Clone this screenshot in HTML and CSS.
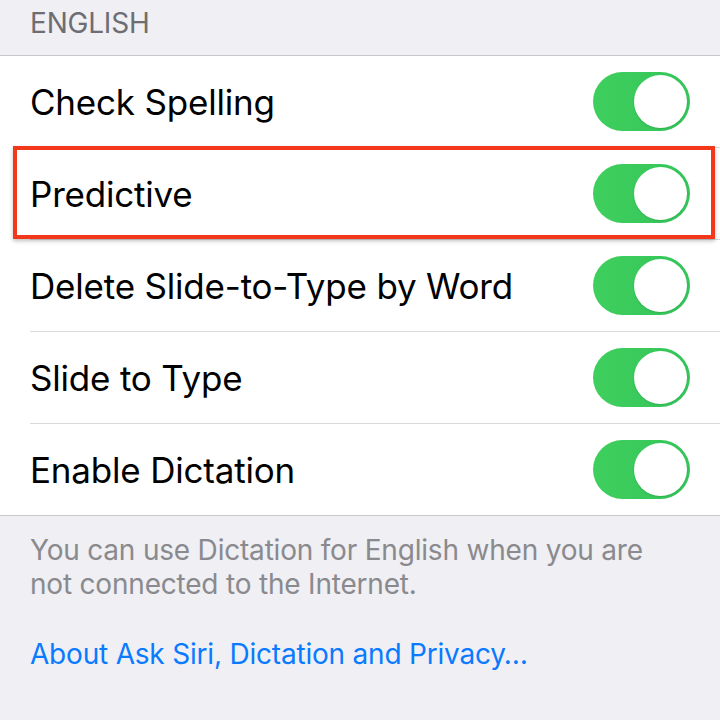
FILE: index.html
```html
<!DOCTYPE html>
<html lang="en">
<head>
<meta charset="utf-8">
<title>Keyboards</title>
<link rel="stylesheet" href="styles.css">
</head>
<body>
<div class="page">
  <div class="section-header">ENGLISH</div>
  <div class="list">
    <div class="row">
      <div class="row-inner">
        <span class="label">Check Spelling</span>
        <span class="switch on"><span class="knob"></span></span>
      </div>
    </div>
    <div class="row highlighted">
      <div class="row-inner">
        <span class="label">Predictive</span>
        <span class="switch on"><span class="knob"></span></span>
      </div>
    </div>
    <div class="row">
      <div class="row-inner">
        <span class="label">Delete Slide-to-Type by Word</span>
        <span class="switch on"><span class="knob"></span></span>
      </div>
    </div>
    <div class="row">
      <div class="row-inner">
        <span class="label">Slide to Type</span>
        <span class="switch on"><span class="knob"></span></span>
      </div>
    </div>
    <div class="row">
      <div class="row-inner">
        <span class="label">Enable Dictation</span>
        <span class="switch on"><span class="knob"></span></span>
      </div>
    </div>
  </div>
  <div class="footer">
    <p class="footer-note">You can use Dictation for English when you are not connected to the Internet.</p>
    <a class="footer-link" href="#">About Ask Siri, Dictation and Privacy…</a>
  </div>
</div>
</body>
</html>
```
FILE: styles.css
```css
html, body {
  margin: 0;
  padding: 0;
  background: #efeff4;
}
body {
  font-family: Inter, "Noto Sans", "Liberation Sans", sans-serif;
  -webkit-font-smoothing: antialiased;
}
.page {
  width: 720px;
  height: 720px;
  overflow: hidden;
  background: #efeff4;
}
.section-header {
  height: 56px;
  box-sizing: border-box;
  padding: 7px 0 0 30px;
  font-size: 28px;
  line-height: 32px;
  color: #6d6d72;
  letter-spacing: -0.2px;
  border-bottom: 1px solid #c8c7cc;
}
.list {
  background: #ffffff;
  border-bottom: 1px solid #c8c7cc;
}
.row {
  position: relative;
  padding-left: 30px;
}
.row-inner {
  height: 92px;
  box-sizing: border-box;
  display: flex;
  align-items: center;
  justify-content: space-between;
  padding-right: 30px;
  border-bottom: 1px solid #d9d9dd;
}
.row:last-child .row-inner {
  border-bottom: none;
  height: 91px;
}
.label {
  font-size: 35px;
  color: #000;
  letter-spacing: -0.2px;
}
.switch {
  width: 97px;
  height: 59px;
  border-radius: 30px;
  background: linear-gradient(90deg, #3fcf5d 0%, #34c55a 100%);
  display: flex;
  align-items: center;
  justify-content: flex-end;
  padding-right: 3px;
  box-sizing: border-box;
}
.knob {
  width: 53px;
  height: 53px;
  border-radius: 50%;
  background: #fff;
  box-shadow: 0 1px 2px rgba(0,0,0,0.12);
}
.highlighted::after {
  content: "";
  position: absolute;
  left: 13px;
  top: -2px;
  width: 702px;
  height: 93px;
  box-sizing: border-box;
  border: 4px solid #f2371b;
  box-shadow: 0 2px 4px rgba(0,0,0,0.25);
  pointer-events: none;
}
.footer {
  padding: 17px 30px 0 30px;
}
.footer-note {
  margin: 0;
  font-size: 28px;
  line-height: 34px;
  color: #8a8a8e;
  letter-spacing: -0.2px;
}
.footer-link {
  display: block;
  margin-top: 36px;
  font-size: 28px;
  line-height: 34px;
  color: #0a7aff;
  text-decoration: none;
  letter-spacing: -0.2px;
}
```
